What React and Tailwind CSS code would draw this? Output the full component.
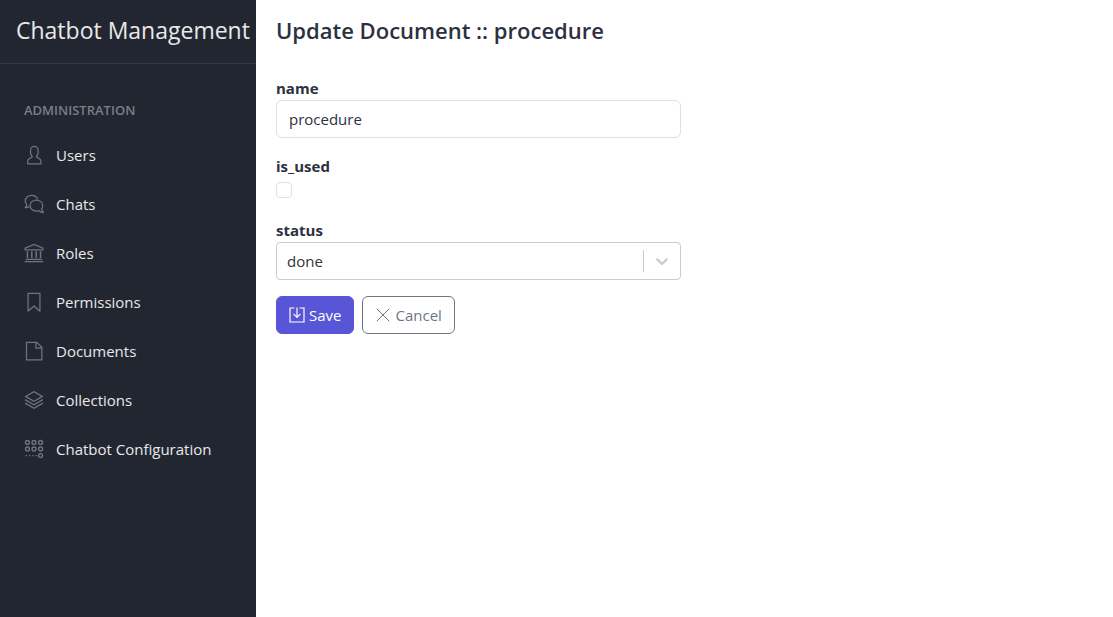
const stroke = { fill: "none", stroke: "currentColor", strokeWidth: 32 };

function Icon({ children, className = "size-5" }) {
  return (
    <svg viewBox="0 0 512 512" fill="currentColor" aria-hidden="true" className={`shrink-0 ${className}`}>
      {children}
    </svg>
  );
}

const icons = {
  user: (
    <path d="M411.6,343.656l-72.823-47.334,27.455-50.334A80.23,80.23,0,0,0,376,207.681V128a112,112,0,0,0-224,0v79.681a80.236,80.236,0,0,0,9.768,38.308l27.455,50.333L116.4,343.656A79.725,79.725,0,0,0,80,410.732V496H448V410.732A79.727,79.727,0,0,0,411.6,343.656ZM416,464H112V410.732a47.836,47.836,0,0,1,21.841-40.246l97.66-63.479-41.64-76.341A48.146,48.146,0,0,1,184,207.681V128a80,80,0,0,1,160,0v79.681a48.146,48.146,0,0,1-5.861,22.985L296.5,307.007l97.662,63.479h0A47.836,47.836,0,0,1,416,410.732Z" />
  ),
  chat: (
    <g {...stroke}>
      <path d="M140 318C115 340 80 350 32 350V338C60 320 76 298 72 270C45 245 32 215 32 180C32 98 105 34 194 34C270 34 330 78 350 138" />
      <path d="M316 154C228 154 156 218 156 297C156 376 228 440 316 440C340 440 360 436 380 428C405 455 440 474 494 474V462C464 444 448 420 450 386C470 360 480 330 480 297C480 218 404 154 316 154Z" />
    </g>
  ),
  bank: (
    <g {...stroke}>
      <path d="M28 176V132L256 36L484 132V176H28Z" />
      <path d="M48 416H464M16 478H496" />
      <path strokeWidth="38" d="M88 208V384M200 208V384M312 208V384M424 208V384" />
    </g>
  ),
  bookmark: (
    <path d="M424,496H388.75L256.008,381.19,123.467,496H88V16H424ZM120,48V456.667l135.992-117.8L392,456.5V48Z" />
  ),
  file: (
    <path fillRule="evenodd" d="M334.627,16H48V496H472V153.373ZM440,166.627V168H320V48h1.373ZM80,464V48H288V200H440V464Z" />
  ),
  layers: (
    <g {...stroke}>
      <path d="M256 42L470 164L256 286L42 164Z" />
      <path d="M28 246L256 376L484 246M28 336L256 466L484 336" />
    </g>
  ),
  dots: (
    <g>
      <g {...stroke} strokeWidth="36">
        <circle cx="88" cy="88" r="50" />
        <circle cx="256" cy="88" r="50" />
        <circle cx="424" cy="88" r="50" />
        <circle cx="88" cy="256" r="50" />
        <circle cx="256" cy="256" r="50" />
        <circle cx="424" cy="256" r="50" />
        <circle cx="424" cy="424" r="50" />
      </g>
      <path d="M40 408h34v34H40zM126 408h34v34h-34zM212 408h34v34h-34zM298 408h34v34h-34z" />
    </g>
  ),
  save: (
    <g {...stroke} strokeWidth="38">
      <path d="M176 32H32V480H480V32H336" />
      <path d="M256 16V330M146 222L256 332L366 222" />
    </g>
  ),
  close: <path {...stroke} d="M56 56L456 456M456 56L56 456" />,
};

const links = [
  ["Users", icons.user],
  ["Chats", icons.chat],
  ["Roles", icons.bank],
  ["Permissions", icons.bookmark],
  ["Documents", icons.file],
  ["Collections", icons.layers],
  ["Chatbot Configuration", icons.dots],
];

export default function App() {
  return (
    <div className="flex min-h-screen bg-white font-['Open_Sans','Noto_Sans',sans-serif] text-[15px] leading-6 text-[#2c3040]">
      <aside className="w-64 shrink-0 bg-[#212631] text-white/90">
        <div className="flex h-16 items-center border-b border-[#323a49] px-4 pb-1 text-[23px] whitespace-nowrap">
          Chatbot Management
        </div>
        <nav aria-label="Administration" className="px-6 pt-9">
          <h2 className="mb-2.5 text-[13px] leading-5 font-semibold text-[#7b7e85] uppercase">Administration</h2>
          <ul>
            {links.map(([label, icon]) => (
              <li key={label}>
                <a href="#" className="flex h-[49px] items-center gap-3 whitespace-nowrap">
                  <Icon className="size-5 text-[#70747d]">{icon}</Icon>
                  {label}
                </a>
              </li>
            ))}
          </ul>
        </nav>
      </aside>

      <main className="min-w-0 flex-1 pt-4 pr-1 pl-5">
        <h1 className="mb-8 text-[22px] leading-7 font-semibold">Update Document :: procedure</h1>
        <form className="grid grid-cols-2 gap-6" onSubmit={(e) => e.preventDefault()}>
          <div>
            <div className="mb-4">
              <label htmlFor="name" className="block font-bold">name</label>
              <input
                id="name"
                defaultValue="procedure"
                className="block h-[38px] w-full rounded-md border border-[#dbdfe6] px-3 outline-none"
              />
            </div>
            <div className="mb-5">
              <label htmlFor="is_used" className="block font-bold">is_used</label>
              <input
                id="is_used"
                type="checkbox"
                className="my-1 block size-4 appearance-none rounded border border-[#dbdfe6]"
              />
            </div>
            <div className="mb-4">
              <label htmlFor="status" className="block font-bold">status</label>
              <div className="relative">
                <select
                  id="status"
                  defaultValue="done"
                  className="block h-[38px] w-full appearance-none rounded border border-[#cccccc] pr-10 pl-2.5 text-[#333333] outline-none"
                >
                  <option>done</option>
                </select>
                <div className="pointer-events-none absolute inset-y-2 right-0 flex w-[38px] items-center justify-center border-l border-[#cccccc] text-[#cccccc]">
                  <svg viewBox="0 0 20 20" fill="currentColor" aria-hidden="true" className="size-5">
                    <path d="M4.516 7.548c0.436-0.446 1.043-0.481 1.576 0l3.908 3.747 3.908-3.747c0.533-0.481 1.141-0.446 1.574 0 0.436 0.445 0.408 1.197 0 1.615-0.406 0.418-4.695 4.502-4.695 4.502-0.217 0.223-0.502 0.335-0.787 0.335s-0.57-0.112-0.789-0.335c0 0-4.287-4.084-4.695-4.502s-0.436-1.17 0-1.615z" />
                  </svg>
                </div>
              </div>
            </div>
            <div className="flex gap-2">
              <button type="submit" className="flex h-[38px] items-center gap-1 rounded-md border border-[#5856d6] bg-[#5856d6] px-3 text-white">
                <Icon className="size-4">{icons.save}</Icon>
                Save
              </button>
              <button type="button" className="flex h-[38px] items-center gap-1 rounded-md border border-[#6b7785] px-3 text-[#6b7785]">
                <Icon className="size-4">{icons.close}</Icon>
                Cancel
              </button>
            </div>
          </div>
        </form>
      </main>
    </div>
  );
}
